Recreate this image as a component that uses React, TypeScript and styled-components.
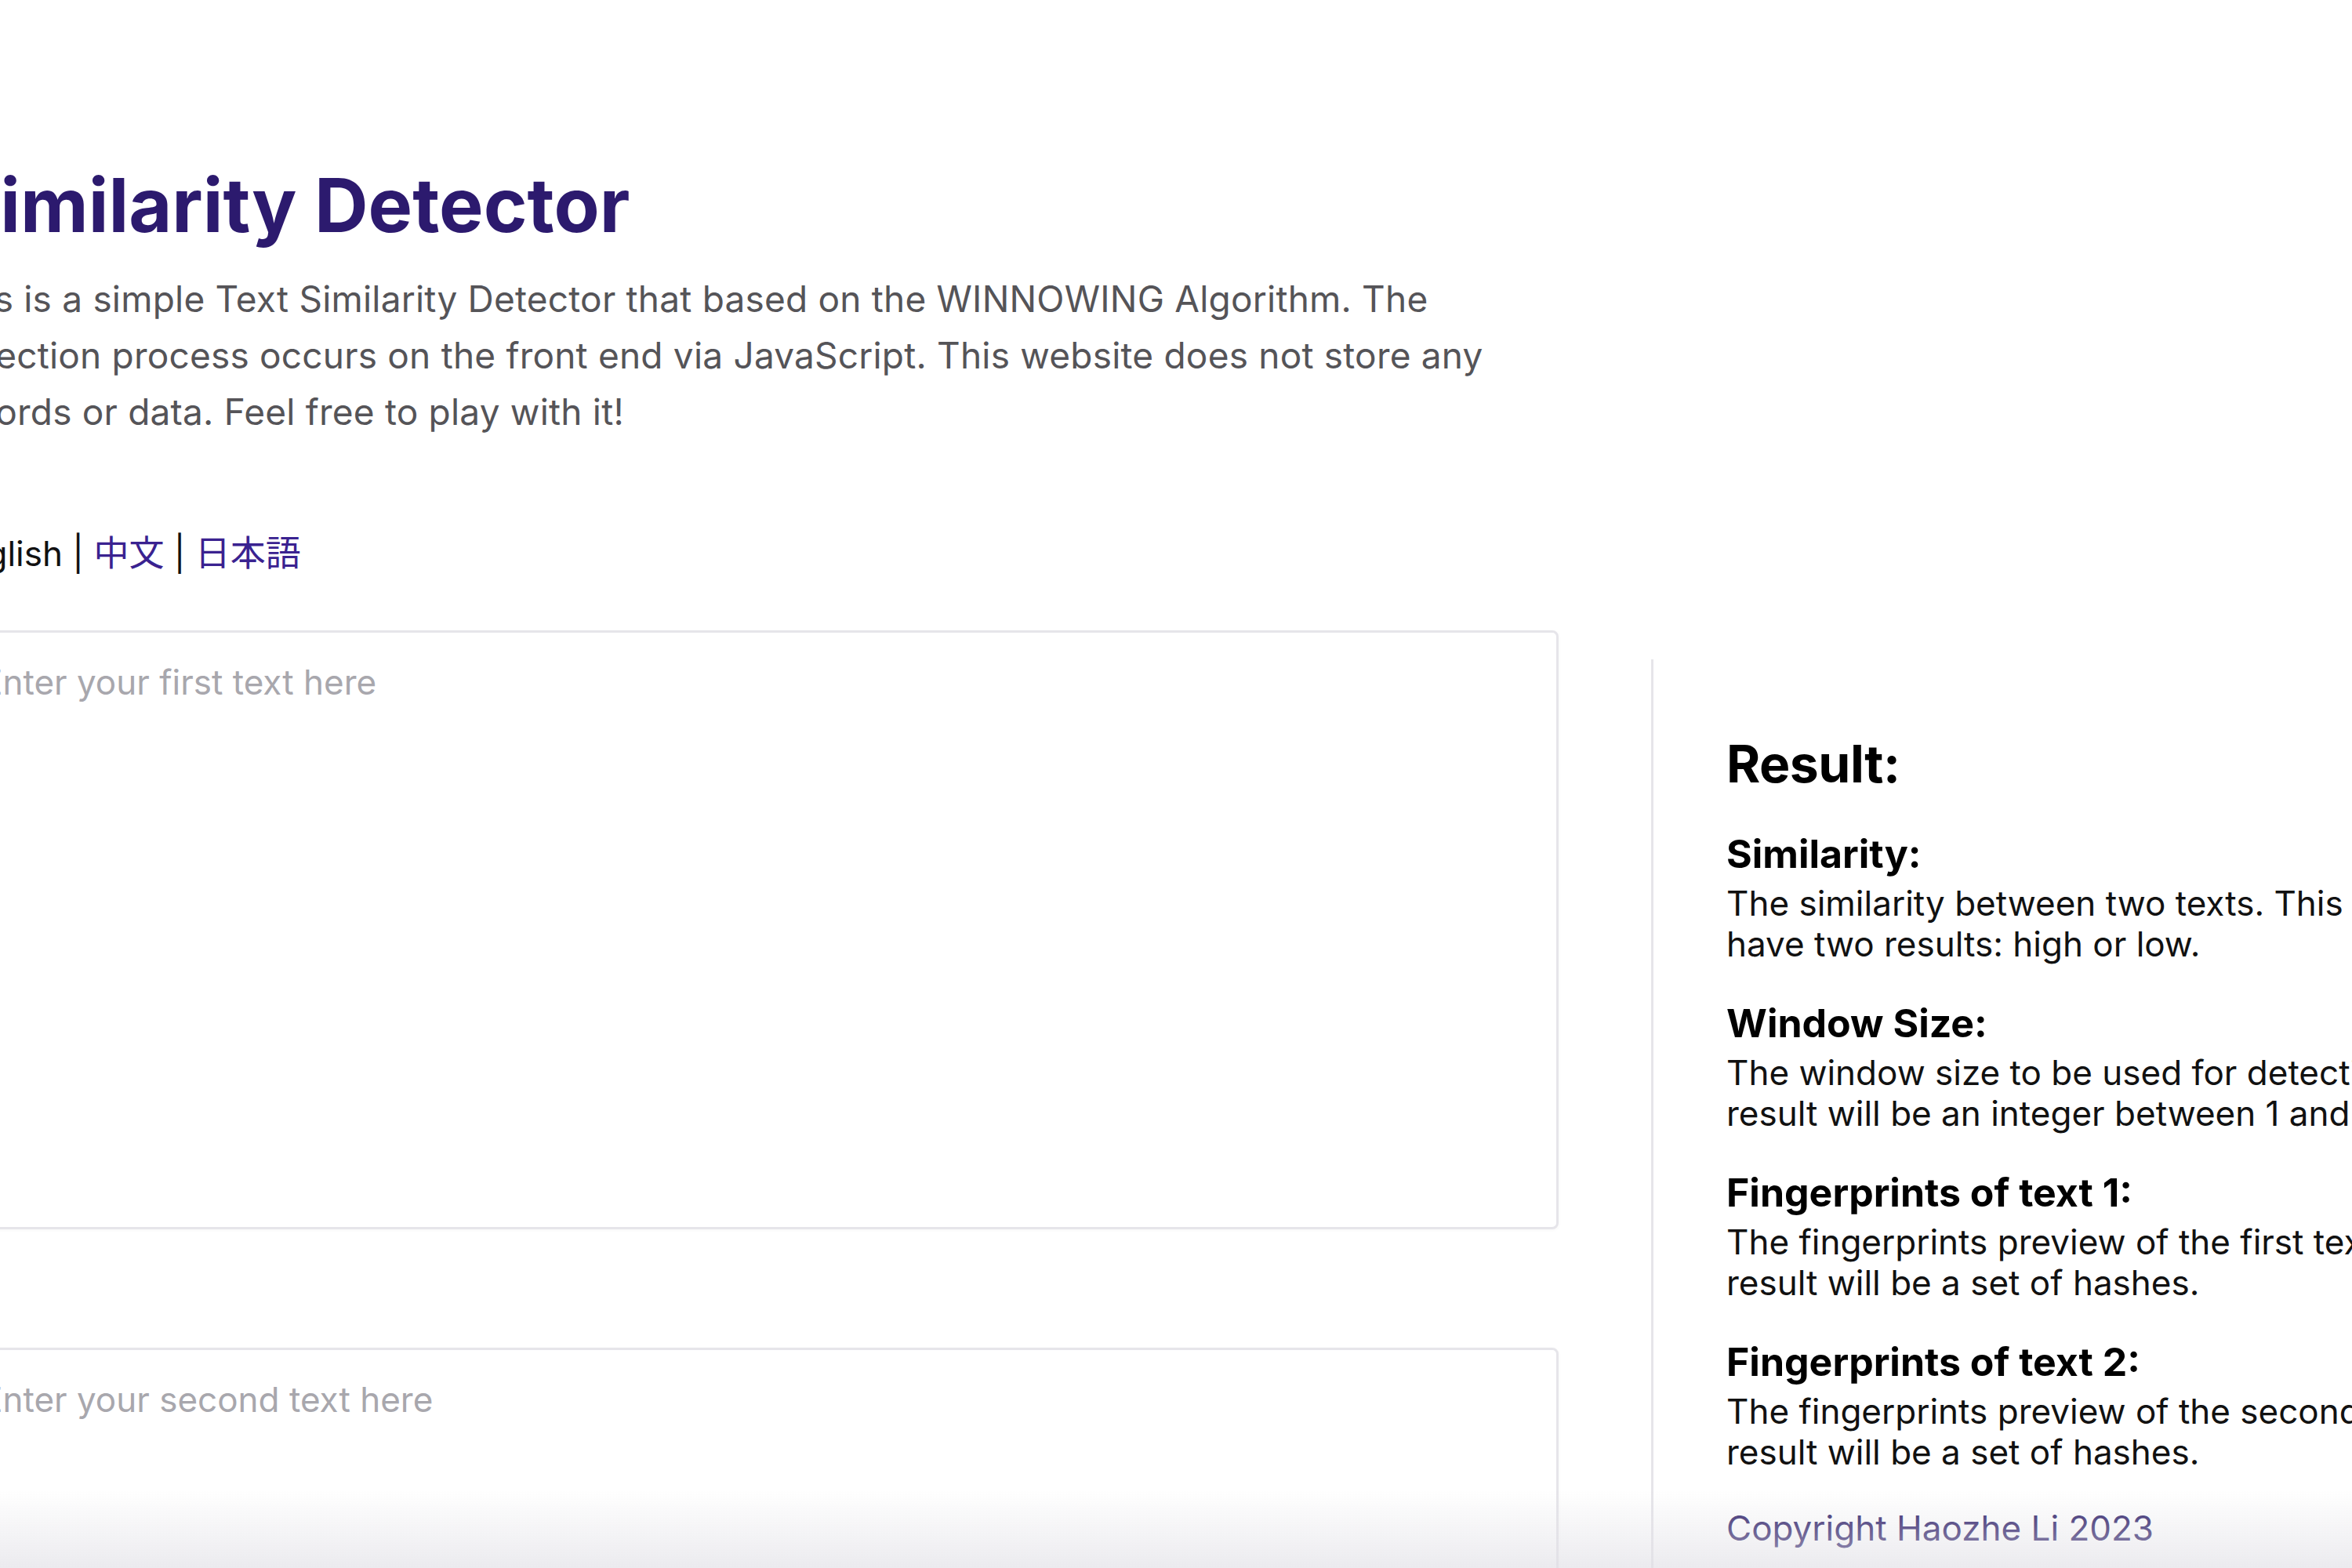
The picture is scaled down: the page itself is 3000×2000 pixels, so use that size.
import styled, { createGlobalStyle } from 'styled-components'

const GlobalStyle = createGlobalStyle`
	html,
	body {
		margin: 0;
		padding: 0;
		background: #ffffff;
		overflow: hidden;
	}
	body {
		font-family: Inter, 'Noto Sans', 'Noto Sans CJK JP', sans-serif;
		color: #111111;
	}
`

const Page = styled.div`
	width: 3400px;
	margin-left: -62px;
	padding-top: 205px;
`

const Title = styled.h1`
	margin: 0;
	font-size: 95px;
	line-height: 114px;
	font-weight: 700;
	color: #2c1a6e;
`

const Intro = styled.p`
	margin: 26px 0 0 -14px;
	font-size: 46px;
	line-height: 72px;
	letter-spacing: 0.2px;
	color: #555458;
	white-space: nowrap;
`

const LangBar = styled.div`
	margin: 116px 0 0 -8px;
	font-size: 44px;
	line-height: 52px;
	color: #111111;
`

const LangLink = styled.a`
	color: #3a2290;
	text-decoration: none;
	font-family: 'Noto Sans CJK JP', sans-serif;
	font-size: 45px;
`

const Main = styled.div`
	display: flex;
	align-items: flex-start;
	margin-top: 72px;
`

const Editors = styled.div`
	flex: 0 0 2050px;
	display: flex;
	flex-direction: column;
	gap: 151px;
`

const TextBox = styled.textarea`
	box-sizing: border-box;
	width: 100%;
	height: 764px;
	margin: 0;
	padding: 30px 36px;
	border: 3px solid #e6e5ea;
	border-radius: 8px;
	box-shadow: 0 1px 4px rgba(0, 0, 0, 0.04);
	resize: none;
	outline: none;
	font-family: Inter, 'Noto Sans', sans-serif;
	font-size: 44px;
	line-height: 66px;
	color: #222222;

	&::placeholder {
		color: #a8a7ad;
	}
`

const ResultPanel = styled.aside`
	flex: 0 0 1200px;
	margin-left: 118px;
	margin-top: 37px;
	padding: 93px 0 0 93px;
	border-left: 3px solid #e6e5ea;
	min-height: 1400px;
	display: flex;
	flex-direction: column;
	gap: 45px;
	white-space: nowrap;
`

const ResultTitle = styled.h2`
	margin: 0;
	font-size: 66px;
	line-height: 80px;
	font-weight: 700;
	letter-spacing: -0.5px;
	color: #000000;
`

const Item = styled.section`
	display: flex;
	flex-direction: column;
	gap: 7px;
`

const ItemTitle = styled.h3`
	margin: 0;
	font-size: 50px;
	line-height: 60px;
	font-weight: 700;
	color: #000000;
`

const ItemText = styled.p`
	margin: 0;
	font-size: 44px;
	line-height: 52px;
	color: #111111;
`

const Copyright = styled.div`
	font-size: 44px;
	line-height: 52px;
	color: #2e1f6a;
`

const BottomFade = styled.div`
	position: fixed;
	left: 0;
	right: 0;
	bottom: 0;
	height: 100px;
	pointer-events: none;
	background: linear-gradient(
		to bottom,
		rgba(225, 224, 230, 0) 0%,
		rgba(225, 224, 230, 0.65) 100%
	);
`

const results = [
	{
		title: 'Similarity:',
		lines: ['The similarity between two texts. This will', 'have two results: high or low.'],
	},
	{
		title: 'Window Size:',
		lines: ['The window size to be used for detection. The', 'result will be an integer between 1 and 10.'],
	},
	{
		title: 'Fingerprints of text 1:',
		lines: ['The fingerprints preview of the first text. The', 'result will be a set of hashes.'],
	},
	{
		title: 'Fingerprints of text 2:',
		lines: ['The fingerprints preview of the second text. The', 'result will be a set of hashes.'],
	},
]

export default function App() {
	return (
		<>
			<GlobalStyle />
			<Page>
				<Title>Similarity Detector</Title>
				<Intro>
					This is a simple Text Similarity Detector that based on the WINNOWING Algorithm. The
					<br />
					detection process occurs on the front end via JavaScript. This website does not store any
					<br />
					records or data. Feel free to play with it!
				</Intro>
				<LangBar>
					English | <LangLink href="#zh">中文</LangLink> | <LangLink href="#ja">日本語</LangLink>
				</LangBar>
				<Main>
					<Editors>
						<TextBox placeholder="Enter your first text here" />
						<TextBox placeholder="Enter your second text here" />
					</Editors>
					<ResultPanel>
						<ResultTitle>Result:</ResultTitle>
						{results.map(item => (
							<Item key={item.title}>
								<ItemTitle>{item.title}</ItemTitle>
								<ItemText>
									{item.lines[0]}
									<br />
									{item.lines[1]}
								</ItemText>
							</Item>
						))}
						<Copyright>Copyright Haozhe Li 2023</Copyright>
					</ResultPanel>
				</Main>
			</Page>
			<BottomFade />
		</>
	)
}
